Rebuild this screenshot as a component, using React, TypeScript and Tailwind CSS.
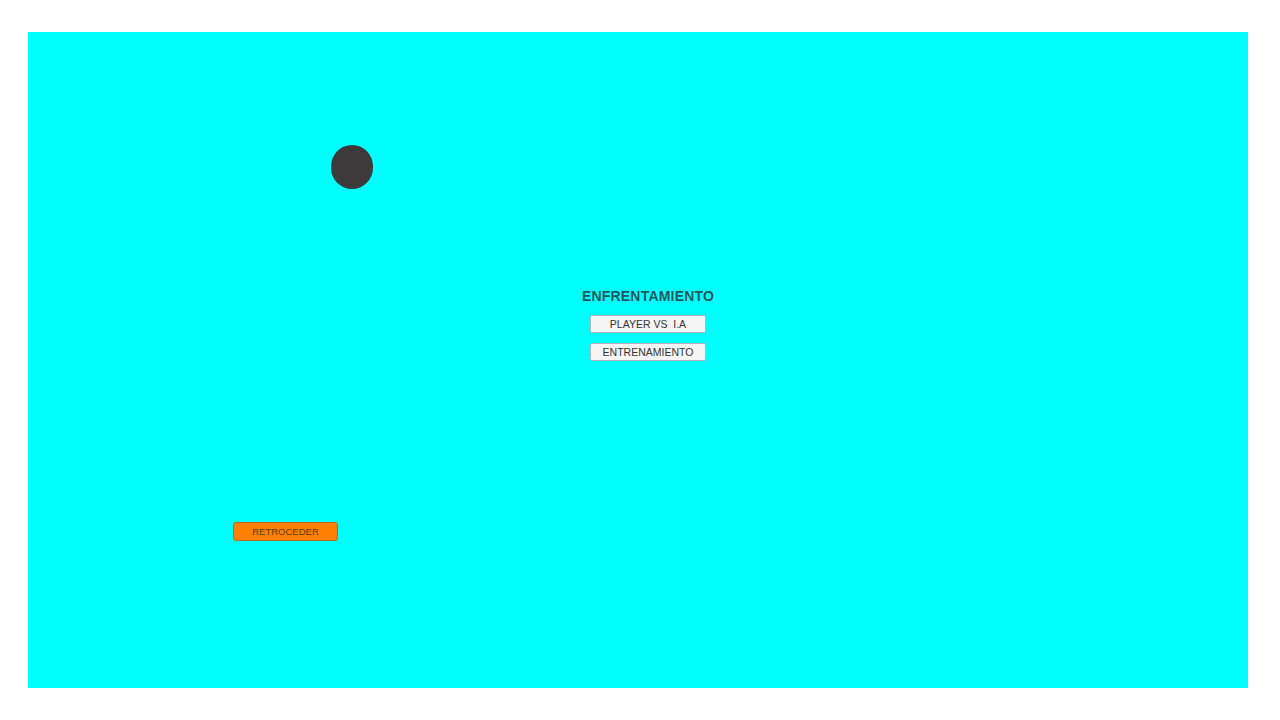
export default function App() {
  return (
    <div className="flex h-screen w-full bg-white pb-8 pl-7 pr-8 pt-8 font-['Liberation_Sans',Arial,sans-serif]">
      <div className="relative flex-1 bg-[#00ffff]">
        {/* ball */}
        <div className="absolute left-[303px] top-[113px] h-[44px] w-[42px] rounded-full bg-[#3c3a3b]" />

        <div className="flex flex-col items-center pl-[20px] pt-[256px]">
          <h1 className="text-[14px] font-bold leading-[16px] tracking-[0.2px] text-[#22575c]">ENFRENTAMIENTO</h1>
          <div className="mt-[11px] flex flex-col gap-[10px]">
            <button
              type="button"
              className="h-[18px] w-[116px] rounded-[2px] border border-[#b5b5b5] bg-[#f5f5f5] text-[10.5px] leading-[16px] text-[#333]"
            >
              PLAYER VS &nbsp;I.A
            </button>
            <button
              type="button"
              className="h-[18px] w-[116px] rounded-[2px] border border-[#b5b5b5] bg-[#f5f5f5] text-[10.5px] leading-[16px] text-[#333]"
            >
              ENTRENAMIENTO
            </button>
          </div>
        </div>

        <button
          type="button"
          className="absolute left-[205px] top-[490px] h-[19px] w-[105px] rounded-[3px] border border-[#b36a1a] bg-[#ff8000] text-[9.5px] leading-[17px] text-[#5a3a10]"
        >
          RETROCEDER
        </button>
      </div>
    </div>
  );
}
